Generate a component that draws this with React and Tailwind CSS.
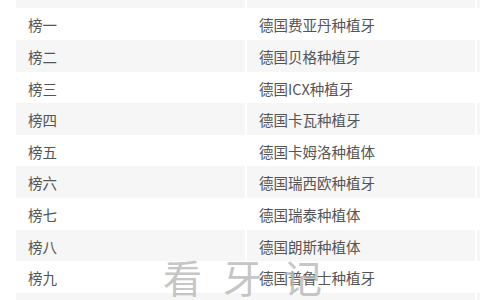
import React from "react";

const rows = [
  ["榜一", "德国费亚丹种植牙", "h-[32px]"],
  ["榜二", "德国贝格种植牙", "h-[32px]"],
  ["榜三", "德国ICX种植牙", "h-[31px]"],
  ["榜四", "德国卡瓦种植牙", "h-[32px]"],
  ["榜五", "德国卡姆洛种植体", "h-[31px]"],
  ["榜六", "德国瑞西欧种植牙", "h-[32px]"],
  ["榜七", "德国瑞泰种植体", "h-[32px]"],
  ["榜八", "德国朗斯种植体", "h-[31px]"],
  ["榜九", "德国普鲁士种植牙", "h-[32px]"],
  ["榜十", "德国美格真种植牙", "h-[32px]"],
];

export default function App() {
  return (
    <div
      className="relative w-[480px] h-[300px] overflow-hidden bg-white text-[#555] text-[14.5px]"
      style={{ fontFamily: '"Noto Sans CJK SC", "Noto Sans", sans-serif' }}
    >
      <div className="ml-[16px] mt-[-24px] w-[462px] flex flex-col">
        <div className="grid grid-cols-[229px_228px_3px] gap-x-[2px] h-[32px] bg-white">
          <div className="bg-[#f6f6f6] flex items-center justify-center text-[#999]">种植牙品牌十大排行榜</div>
          <div className="bg-[#f6f6f6] flex items-center justify-center text-[#999]">德国种植牙品牌推荐名单</div>
          <div className="bg-[#f6f6f6]" />
        </div>
        {rows.map(([a, b, h], i) => {
          const bg = i % 2 === 1 ? "bg-[#f6f6f6]" : "bg-white";
          return (
            <div key={a} className={`grid grid-cols-[229px_228px_3px] gap-x-[2px] ${h}`}>
              <div className={`${bg} flex items-center pl-[12px] pt-[2px]`}>{a}</div>
              <div className={`${bg} flex items-center pl-[12px] pt-[2px]`}>{b}</div>
              <div className={bg} />
            </div>
          );
        })}
      </div>
      <div className="absolute left-[163px] top-[257px] text-[39px] leading-none tracking-[21px] text-[#b8b8b8] opacity-80">
        看牙记
      </div>
    </div>
  );
}
